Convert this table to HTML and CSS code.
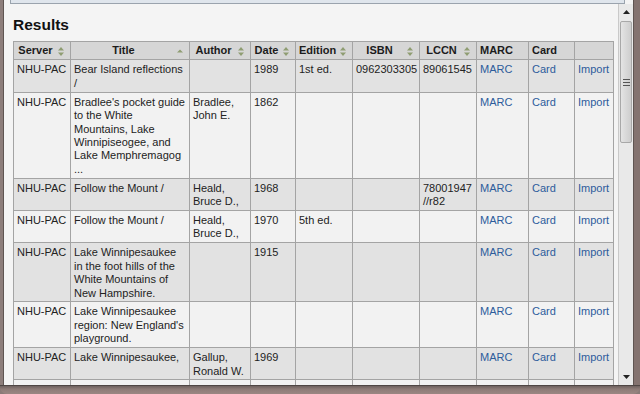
FILE: index.html
```html
<!DOCTYPE html>
<html>
<head>
<meta charset="utf-8">
<link rel="stylesheet" href="styles.css">
</head>
<body>
<div class="window">
  <div class="mid">
    <div class="frame-l"></div>
    <div class="client">
      <div class="strip"></div>
      <div class="pane">
        <div class="content">
          <h2 class="title">Results</h2>
          <table class="results">
            <colgroup>
              <col style="width:57px"><col style="width:119px"><col style="width:61px"><col style="width:45px"><col style="width:57px"><col style="width:67px"><col style="width:57px"><col style="width:52px"><col style="width:46px"><col style="width:39px">
            </colgroup>
            <thead>
              <tr>
                <th class="sort">Server<svg class="si" viewBox="0 0 6 9"><path d="M3 0L6 3.5H0Z"/><path d="M3 9L6 5.5H0Z"/></svg></th>
                <th class="sort">Title<svg class="si" viewBox="0 0 6 9"><path d="M3 2.5L6 5.5H0Z"/></svg></th>
                <th class="sort">Author<svg class="si" viewBox="0 0 6 9"><path d="M3 0L6 3.5H0Z"/><path d="M3 9L6 5.5H0Z"/></svg></th>
                <th class="sort">Date<svg class="si" viewBox="0 0 6 9"><path d="M3 0L6 3.5H0Z"/><path d="M3 9L6 5.5H0Z"/></svg></th>
                <th class="sort">Edition<svg class="si" viewBox="0 0 6 9"><path d="M3 0L6 3.5H0Z"/><path d="M3 9L6 5.5H0Z"/></svg></th>
                <th class="sort">ISBN<svg class="si" viewBox="0 0 6 9"><path d="M3 0L6 3.5H0Z"/><path d="M3 9L6 5.5H0Z"/></svg></th>
                <th class="sort">LCCN<svg class="si" viewBox="0 0 6 9"><path d="M3 0L6 3.5H0Z"/><path d="M3 9L6 5.5H0Z"/></svg></th>
                <th>MARC</th>
                <th>Card</th>
                <th></th>
              </tr>
            </thead>
            <tbody>
              <tr class="odd"><td>NHU-PAC</td><td>Bear Island reflections /</td><td></td><td>1989</td><td>1st ed.</td><td>0962303305</td><td>89061545</td><td><a>MARC</a></td><td><a>Card</a></td><td><a>Import</a></td></tr>
              <tr class="even"><td>NHU-PAC</td><td>Bradlee's pocket guide to the White Mountains, Lake Winnipiseogee, and Lake Memphremagog ...</td><td>Bradlee, John E.</td><td>1862</td><td></td><td></td><td></td><td><a>MARC</a></td><td><a>Card</a></td><td><a>Import</a></td></tr>
              <tr class="odd"><td>NHU-PAC</td><td>Follow the Mount /</td><td>Heald, Bruce D.,</td><td>1968</td><td></td><td></td><td>78001947 //r82</td><td><a>MARC</a></td><td><a>Card</a></td><td><a>Import</a></td></tr>
              <tr class="even"><td>NHU-PAC</td><td>Follow the Mount /</td><td>Heald, Bruce D.,</td><td>1970</td><td>5th ed.</td><td></td><td></td><td><a>MARC</a></td><td><a>Card</a></td><td><a>Import</a></td></tr>
              <tr class="odd"><td>NHU-PAC</td><td>Lake Winnipesaukee in the foot hills of the White Mountains of New Hampshire.</td><td></td><td>1915</td><td></td><td></td><td></td><td><a>MARC</a></td><td><a>Card</a></td><td><a>Import</a></td></tr>
              <tr class="even"><td>NHU-PAC</td><td>Lake Winnipesaukee region: New England's playground.</td><td></td><td></td><td></td><td></td><td></td><td><a>MARC</a></td><td><a>Card</a></td><td><a>Import</a></td></tr>
              <tr class="odd"><td>NHU-PAC</td><td>Lake Winnipesaukee,</td><td>Gallup, Ronald W.</td><td>1969</td><td></td><td></td><td></td><td><a>MARC</a></td><td><a>Card</a></td><td><a>Import</a></td></tr>
              <tr class="even"><td>NHU-PAC</td><td>Mailboat on the lake</td><td>Heald, Bruce D.,</td><td>1980</td><td></td><td></td><td></td><td><a>MARC</a></td><td><a>Card</a></td><td><a>Import</a></td></tr>
            </tbody>
          </table>
        </div>
        <div class="scrollbar">
          <div class="sb-btn"><svg class="arrow" viewBox="0 0 7 4"><path d="M3.5 0L7 4H0Z"/></svg></div>
          <div class="sb-thumb"><svg class="grip" viewBox="0 0 7 7"><path d="M0 0.5H7M0 3.5H7M0 6.5H7"/></svg></div>
          <div class="sb-track"></div>
          <div class="sb-btn"><svg class="arrow" viewBox="0 0 7 4"><path d="M3.5 4L7 0H0Z"/></svg></div>
        </div>
      </div>
    </div>
    <div class="frame-r"></div>
  </div>
  <div class="frame-b"></div>
</div>
</body>
</html>
```
FILE: styles.css
```css
html, body {
  margin: 0;
  padding: 0;
  width: 640px;
  height: 394px;
  overflow: hidden;
  background: #8a7a77;
}
.window {
  width: 640px;
  height: 394px;
  display: flex;
  flex-direction: column;
  background: #8a7a77;
  border-radius: 0 0 7px 7px;
  overflow: hidden;
}
.mid {
  height: 385px;
  display: flex;
}
.frame-l {
  width: 3px;
  background: #8d7e7b;
  border-right: 1px solid #5f5552;
}
.frame-r {
  width: 6px;
  background: #847370;
  border-left: 1px solid #5f5552;
}
.frame-b {
  flex: 1;
  background: linear-gradient(#6f6260, #8e7c78 40%, #9a8682);
  border-top: 1px solid #4f4644;
}
.client {
  flex: 1;
  display: flex;
  flex-direction: column;
  background: #f4f4f4;
  min-width: 0;
}
.strip {
  height: 3px;
  margin: 0 8px 0 6px;
  background: #dfe5ec;
  border: 1px solid #9aa3ad;
  border-top: 0;
}
.pane {
  flex: 1;
  display: flex;
  min-height: 0;
}
.content {
  flex: 1;
  overflow: hidden;
  padding-left: 9px;
  background: #f4f4f4;
  font-family: "Liberation Sans", Arial, sans-serif;
  color: #222;
}
.title {
  margin: 12px 0 7px 0;
  font-size: 15.5px;
  line-height: 18px;
  font-weight: bold;
  color: #111;
}
.results {
  border-collapse: collapse;
  table-layout: fixed;
  width: 600px;
  font-size: 11px;
  line-height: 13.4px;
}
.results th,
.results td {
  border: 1px solid #a4a4a4;
  padding: 3px 3px 1.5px 3px;
  vertical-align: top;
  text-align: left;
  overflow: hidden;
}
.results th {
  background: #d6d6d6;
  font-weight: bold;
  color: #1c1c1c;
  padding-top: 2px;
  padding-bottom: 2px;
  height: 13px;
  white-space: nowrap;
  position: relative;
}
.results th.sort {
  text-align: center;
  padding-right: 16px;
}
.si {
  position: absolute;
  right: 6px;
  top: 5px;
  width: 6px;
  height: 9px;
  fill: #8f9d72;
}
.results tr.odd td {
  background: #e2e2e2;
}
.results tr.even td {
  background: #f2f2f2;
}
.results a {
  color: #2d5c9c;
  text-decoration: none;
}
.scrollbar {
  width: 14px;
  display: flex;
  flex-direction: column;
  background: #e9e9e9;
  border-left: 1px solid #c9c9c9;
}
.sb-btn {
  height: 16px;
  display: flex;
  align-items: center;
  justify-content: center;
}
.arrow {
  width: 7px;
  height: 4px;
  fill: #222;
}
.sb-thumb {
  height: 120px;
  margin: 1px 1px 0 1px;
  background: linear-gradient(90deg, #e4e4e4, #d8d8d8 50%, #cdcdcd);
  border: 1px solid #a8a8a8;
  border-radius: 2px;
  display: flex;
  align-items: center;
  justify-content: center;
}
.grip {
  width: 7px;
  height: 7px;
  stroke: #555;
  stroke-width: 1;
}
.sb-track {
  flex: 1;
}
```
